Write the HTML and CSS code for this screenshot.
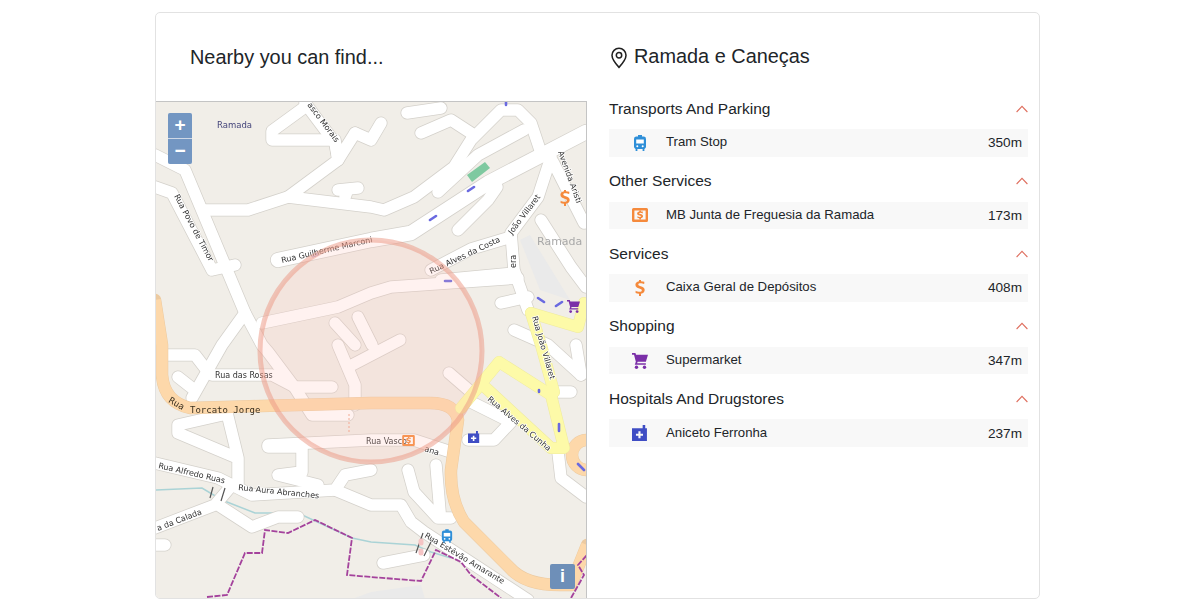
FILE: index.html
```html
<!DOCTYPE html>
<html lang="en">
<head>
<meta charset="utf-8">
<title>Nearby</title>
<link rel="stylesheet" href="styles.css">
</head>
<body>
<svg class="defs" aria-hidden="true">
  <defs>
    <symbol id="i-tram" viewBox="0 0 14 16">
      <path d="M5 0h4v1.600h1.600A2.400 2.400 0 0 1 13 4v7.800a2.200 2.200 0 0 1-1.600 2.100V16H9.600v-2H4.400v2H2.600v-2.100A2.200 2.200 0 0 1 1 11.800V4a2.400 2.400 0 0 1 2.400-2.400H5z"/>
      <path class="cut" d="M3.200 4.400h7.600v4.200H3.200z"/>
      <circle class="cut" cx="4.300" cy="11.300" r="1"/>
      <circle class="cut" cx="9.700" cy="11.300" r="1"/>
    </symbol>
    <symbol id="i-mb" viewBox="0 0 16 14">
      <path fill-rule="evenodd" d="M1.500 0h13A1.500 1.500 0 0 1 16 1.500v11a1.500 1.500 0 0 1-1.500 1.500h-13A1.500 1.500 0 0 1 0 12.500v-11A1.500 1.500 0 0 1 1.500 0zM2.400 2.400v9.200h11.200V2.400z"/>
      <path d="M10.800 4.600V3.500H9V2.500H7.300v1C6 3.700 5.100 4.400 5.100 5.500c0 1.300 1.100 1.800 2.500 2.100 1 .3 1.300.5 1.300.8 0 .3-.3.5-1 .5-.8 0-1.900-.3-2.500-.6v1.500c.5.300 1.300.4 1.900.5v1.200H9v-1.200c1.200-.2 2-.9 2-2 0-1.500-1.200-2-2.500-2.300-1-.2-1.400-.4-1.400-.7 0-.3.400-.5 1.100-.5.800 0 1.900.2 2.600.6z"/>
    </symbol>
    <symbol id="i-dollar" viewBox="0 0 10 16">
      <path d="M9.300 3.600V1.800C8.400 1.500 7.300 1.300 6 1.200V0H4v1.300C1.800 1.600.4 2.900.4 4.800c0 2.300 1.900 3.100 3.900 3.700 1.700.5 2.500 1 2.500 1.900 0 .9-.8 1.400-2.100 1.400-1.500 0-3-.4-4.100-1.100v2.200c.9.500 2.200.8 3.400.9V16h2v-2.200c2.300-.4 3.700-1.700 3.700-3.700 0-2.400-1.900-3.200-4-3.800-1.700-.5-2.400-.9-2.400-1.700 0-.8.700-1.300 2-1.300 1.400 0 2.900.3 3.700.8z"/>
    </symbol>
    <symbol id="i-cart" viewBox="0 0 15 15">
      <path d="M0 0h3.200l.6 1.600H15l-2 6.600H5.300l-.5 1.300H13V11H2.600l1-2.900L1.900 1.600H0z"/>
      <circle cx="4.200" cy="13.400" r="1.600"/>
      <circle cx="11.700" cy="13.400" r="1.600"/>
    </symbol>
    <symbol id="i-pharm" viewBox="0 0 15 15">
      <path fill-rule="evenodd" d="M0 3h10V0h2.400v3H14v12H0zM6 5.800v2.300H3.700v2H6v2.300h2v-2.300h2.300v-2H8V5.800z"/>
    </symbol>
  </defs>
</svg>

<main class="card">
  <section class="left">
    <h2 class="left-title">Nearby you can find...</h2>
    <div class="map">
      <svg class="map-svg" viewBox="156 102 430 497" role="img" aria-label="Street map of Ramada">
        <defs>
          <g id="minor">
            <path d="M155 155L185 170L245 313L262 345L268 352L295 388L312 415L348 415"/>
            <path d="M245 313L222 345L192 398"/>
            <path d="M155 187L172 193L212 270L235 265"/>
            <path d="M205 210H248L288 197L371 207L384 210L414 197L454 167L471 140L501 110L518 110L531 123L541 153"/>
            <path d="M288 197L338 160L355 133M338 160L335 140H272V131L305 107"/>
            <path d="M305 103L335 143L338 160M355 133L371 140L381 123"/>
            <path d="M338 190L358 188M348 189L345 197"/>
            <path d="M407 113L441 108M421 133L451 120L471 133"/>
            <path d="M438 192L478 155L524 130"/>
            <path d="M488 187H497L488 200L458 230"/>
            <path d="M551 157L538 197L511 233L514 270L528 310"/>
            <path d="M431 270L471 249L511 237"/>
            <path d="M553 162L584 223M541 220L571 267L586 287"/>
            <path d="M441 280L514 273M501 303L528 297M514 330L548 345L581 375"/>
            <path d="M262 323L338 307L371 293L391 287L518 278"/>
            <path d="M335 323L355 345M358 317L372 345M338 345L355 385V405M352 365L400 340"/>
            <path d="M165 355H195L205 368M212 375H272L295 387H332M178 377L192 388"/>
            <path d="M222 415L178 425V433L235 457M227 413L238 458V485"/>
            <path d="M155 463L218 478L238 488L252 495L335 490L345 475L371 470"/>
            <path d="M335 490L371 505H401L411 522L424 532L528 600"/>
            <path d="M155 528L215 505L232 485M218 505L252 527L278 517H298"/>
            <path d="M268 447H302V472L278 475L318 485"/>
            <path d="M268 445L371 440H414L451 452"/>
            <path d="M155 545H165"/>
            <path d="M408 470L414 492L438 518H451M436 465L440 512"/>
            <path d="M383 563L424 555"/>
            <path d="M471 402L511 422L494 440H468"/>
            <path d="M449 373L471 392"/>
            <path d="M558 392H571M558 452L561 478L586 497"/>
            <path d="M576 345L581 375"/>
          </g>
          <path id="main-road" d="M278 260L371 240L411 233L488 183L586 132"/>
          <g id="orange">
            <path d="M155 300L162 345V375Q164 402 190 408L371 403H430Q455 403 458 420L451 470Q450 500 464 522L510 568Q525 585 560 585L571 585L587 545"/>
            <circle cx="587" cy="455" r="15"/>
          </g>
          <g id="yellow">
            <path d="M531 313L578 327L584 303"/>
            <path d="M499 362L551 395L564 448H551L486 388M499 362L461 408"/>
            <path d="M531 313L541 345L554 392"/>
          </g>
        </defs>

        <rect class="land" x="156" y="102" width="430" height="497"/>
        <path class="grey-area" d="M371 592L421 585L425 599H352z"/>
        <path class="grey-area" d="M520 240L530 235L570 300L540 290z"/>
        <path class="stream" d="M155 490L202 488L222 500L255 513H298L352 538L371 542L415 545L431 552L451 558"/>

        <use href="#minor" class="casing"/>
        <use href="#main-road" class="casing-wide"/>
        <use href="#minor" class="road"/>
        <use href="#main-road" class="road-wide"/>

        <path class="green" d="M467 175L485 162L490 168L472 182z"/>

        <use href="#orange" class="orange-casing"/>
        <use href="#orange" class="orange"/>
        <use href="#yellow" class="yellow-casing"/>
        <use href="#yellow" class="yellow"/>

        <path class="pink-dash" d="M349 414V433"/>
        <path class="bridge" d="M213 487L210 498M225 488L221 501M423 533L416 553M433 538L424 556"/>
        <path class="pink-dot" d="M421 541V543M421 551V553"/>

        <path class="boundary" d="M207 597L227 595L245 553L262 553L265 530L288 533L315 520L352 538L347 575L371 577L421 581L436 550L461 562L471 575L501 598"/>
        <path class="boundary" d="M571 598L584 575L578 565L587 555"/>
        <path class="arrow" d="M468 191L474 187M430 220L436 216M445 281H451M538 298L544 302M556 306L562 302M506 102V105M313 256L318 254M559 424V431M578 464L584 470M539 390V392"/>

        <text class="lbl lbl-place" x="217" y="128">Ramada</text>
        <text class="lbl" transform="translate(307 105) rotate(53)">asco Morais</text>
        <text class="lbl" transform="translate(174 196) rotate(62)">Rua Povo de Timor</text>
        <text class="lbl" transform="translate(282 263) rotate(-13)">Rua Guilherme Marconi</text>
        <text class="lbl" transform="translate(431 274) rotate(-25)">Rua Alves da Costa</text>
        <text class="lbl" transform="translate(512 235) rotate(-53)">João Villaret</text>
        <text class="lbl" transform="translate(516 268) rotate(-90)">era</text>
        <text class="lbl" transform="translate(558 152) rotate(70)">Avenida Aristi</text>
        <text class="lbl lbl-town" x="537" y="245">Ramada</text>
        <text class="lbl" transform="translate(532 317) rotate(74)">Rua João Villaret</text>
        <text class="lbl" transform="translate(487 400) rotate(40)">Rua Alves da Cunha</text>
        <text class="lbl" x="215" y="378">Rua das Rosas</text>
        <text class="lbl lbl-big" transform="translate(168 402) rotate(30)">Rua</text>
        <text class="lbl lbl-big" x="190" y="413">Torcato Jorge</text>
        <text class="lbl" x="366" y="444">Rua Vasco</text>
        <text class="lbl" transform="translate(424 451) rotate(17)">ana</text>
        <text class="lbl" transform="translate(158 468) rotate(13)">Rua Alfredo Ruas</text>
        <text class="lbl" transform="translate(238 490) rotate(6)">Rua Aura Abranches</text>
        <text class="lbl" transform="translate(158 531) rotate(-21)">a da Calada</text>
        <text class="lbl" transform="translate(424 537) rotate(31)">Rua Estêvão Amarante</text>

        <use href="#i-dollar" class="ic-orange" x="560" y="190" width="10" height="16"/>
        <use href="#i-cart" class="ic-purple" x="567" y="300" width="13" height="13"/>
        <use href="#i-pharm" class="ic-blue" x="468" y="431" width="12" height="12"/>
        <use href="#i-mb" class="ic-orange" x="402" y="435" width="13" height="11"/>
        <use href="#i-tram" class="ic-tram" x="441" y="529" width="12" height="14"/>

        <circle class="radius" cx="371" cy="351" r="111"/>
      </svg>

      <div class="zoom-ctl">
        <span class="zoom-btn">+</span>
        <span class="zoom-btn">−</span>
      </div>
      <span class="info-btn">i</span>
    </div>
  </section>

  <section class="right">
    <h2 class="place">
      <svg class="pin" viewBox="0 0 20 24"><path d="M10 1.200a7.800 7.800 0 0 0-7.800 7.800c0 5 5.200 10.600 7.800 13.400 2.600-2.800 7.800-8.400 7.800-13.400A7.800 7.800 0 0 0 10 1.200z"/><circle cx="10" cy="9" r="3"/></svg>
      Ramada e Caneças
    </h2>
    <div class="groups">
      <div class="group">
        <div class="group-head"><span>Transports And Parking</span><svg class="chev" viewBox="0 0 12 7"><path d="M.6 6.500L6 .8l5.400 5.700"/></svg></div>
        <div class="row"><svg class="row-ic ic-tram"><use href="#i-tram"/></svg><span class="row-name">Tram Stop</span><span class="row-dist">350m</span></div>
      </div>
      <div class="group">
        <div class="group-head"><span>Other Services</span><svg class="chev" viewBox="0 0 12 7"><path d="M.6 6.500L6 .8l5.400 5.700"/></svg></div>
        <div class="row"><svg class="row-ic ic-orange"><use href="#i-mb"/></svg><span class="row-name">MB Junta de Freguesia da Ramada</span><span class="row-dist">173m</span></div>
      </div>
      <div class="group">
        <div class="group-head"><span>Services</span><svg class="chev" viewBox="0 0 12 7"><path d="M.6 6.500L6 .8l5.400 5.700"/></svg></div>
        <div class="row"><svg class="row-ic ic-orange"><use href="#i-dollar"/></svg><span class="row-name">Caixa Geral de Depósitos</span><span class="row-dist">408m</span></div>
      </div>
      <div class="group">
        <div class="group-head"><span>Shopping</span><svg class="chev" viewBox="0 0 12 7"><path d="M.6 6.500L6 .8l5.400 5.700"/></svg></div>
        <div class="row"><svg class="row-ic ic-purple"><use href="#i-cart"/></svg><span class="row-name">Supermarket</span><span class="row-dist">347m</span></div>
      </div>
      <div class="group">
        <div class="group-head"><span>Hospitals And Drugstores</span><svg class="chev" viewBox="0 0 12 7"><path d="M.6 6.500L6 .8l5.400 5.700"/></svg></div>
        <div class="row"><svg class="row-ic ic-blue"><use href="#i-pharm"/></svg><span class="row-name">Aniceto Ferronha</span><span class="row-dist">237m</span></div>
      </div>
    </div>
  </section>
</main>
</body>
</html>
```

FILE: styles.css
```css
* { box-sizing: border-box; }
html, body { height: 100%; }
body {
  margin: 0;
  background: #fff;
  color: #212529;
  font-family: "Liberation Sans", Arial, sans-serif;
  overflow: hidden;
}
.defs { width: 0; height: 0; display: block; overflow: hidden; }

.card {
  width: 885px;
  height: 587px;
  margin: 12px 0 0 155px;
  border: 1px solid #e2e2e2;
  border-radius: 5px;
  display: grid;
  grid-template-columns: 431px 1fr;
  overflow: hidden;
}

.left { display: flex; flex-direction: column; min-height: 0; }
.left-title {
  margin: 0;
  height: 88px;
  padding: 32px 0 0 34px;
  font-size: 19.900px;
  line-height: 24px;
  font-weight: 400;
}
.map {
  position: relative;
  flex: 1;
  border-top: 1px solid #c4c4c4;
  border-right: 1px solid #c4c4c4;
  overflow: hidden;
}
.map-svg { display: block; width: 430px; height: 497px; filter: blur(.45px); }

.land { fill: #f1eee8; }
.grey-area { fill: #eaeaea; }
.stream { fill: none; stroke: #aad3d6; stroke-width: 1.500; }
.casing, .casing-wide, .road, .road-wide, .orange-casing, .orange, .yellow-casing, .yellow {
  fill: none;
  stroke-linecap: round;
  stroke-linejoin: round;
}
.casing { stroke: #d4d1cb; stroke-width: 13; }
.road { stroke: #fff; stroke-width: 11.500; }
.casing-wide { stroke: #d4d1cb; stroke-width: 16; }
.road-wide { stroke: #fff; stroke-width: 14.500; }
.orange-casing { stroke: #eccaa0; stroke-width: 12.500; }
.orange { stroke: #fdd8aa; stroke-width: 11.500; stroke-linecap: butt; }
.yellow-casing { stroke: #eeeaa0; stroke-width: 12; }
.yellow { stroke: #fdfaa8; stroke-width: 11; }
.green { fill: #7fc9a0; }
.pink-dash { fill: none; stroke: #f0a58c; stroke-width: 1; stroke-dasharray: 2 2; }
.bridge { fill: none; stroke: #555; stroke-width: 1.200; }
.pink-dot { fill: none; stroke: #f5c4c4; stroke-width: 5; stroke-linecap: round; }
.boundary { fill: none; stroke: #a4429c; stroke-width: 1.800; stroke-dasharray: 6 1.500; }
.arrow { fill: none; stroke: #6a6ae0; stroke-width: 2.600; stroke-linecap: round; }

.lbl {
  font-family: "DejaVu Sans", sans-serif;
  font-size: 8px;
  fill: #333;
  stroke: #fff;
  stroke-width: 1.500px;
  paint-order: stroke;
}
.lbl-place { fill: #44447a; font-size: 8.500px; stroke: none; }
.lbl-town { fill: #a8a8a8; font-size: 11px; stroke: none; }
.lbl-big { font-size: 9px; stroke: none; fill: #3a3020; font-family: "DejaVu Sans Mono", monospace; }

.radius { fill: rgba(255, 190, 180, .2); stroke: rgba(235, 150, 130, .5); stroke-width: 5; }

.zoom-ctl {
  position: absolute;
  left: 12px;
  top: 11px;
  width: 24px;
  display: flex;
  flex-direction: column;
  gap: 1px;
  border-radius: 2px;
  overflow: hidden;
  background: #cfd8e6;
}
.zoom-btn {
  height: 25px;
  background: #7396c2;
  color: #fff;
  font-weight: 700;
  font-size: 19px;
  line-height: 24px;
  text-align: center;
}
.info-btn {
  position: absolute;
  left: 394px;
  top: 462px;
  width: 25px;
  height: 25px;
  border-radius: 2px;
  background: #6e8fb8;
  color: #fff;
  font-weight: 700;
  font-size: 18px;
  line-height: 25px;
  text-align: center;
}

.right { padding: 0 11px 0 22px; min-width: 0; }
.place {
  margin: 0;
  height: 81px;
  padding-top: 31px;
  font-size: 19.900px;
  line-height: 24px;
  font-weight: 400;
  display: flex;
  align-items: flex-start;
  gap: 6px;
}
.pin { width: 18px; height: 22px; margin: 3px 0 0 1px; fill: none; stroke: #222; stroke-width: 1.700; }
.groups { display: flex; flex-direction: column; gap: 10px; }
.group-head {
  height: 28px;
  margin-bottom: 7px;
  padding-top: 1px;
  display: flex;
  align-items: center;
  justify-content: space-between;
  font-size: 15.500px;
}
.chev { width: 12px; height: 8px; fill: none; stroke: #df7060; stroke-width: 1.100; }
.row {
  height: 27.600px;
  background: #f8f8f8;
  display: flex;
  align-items: center;
  font-size: 13.600px;
  padding-right: 6px;
}
.row-ic { width: 16px; height: 16px; margin-left: 23px; flex: none; }
.row-name { margin-left: 18px; flex: 1; font-size: 13.200px; transform: translateY(-1px); }
.row-dist { flex: none; }

.ic-tram { fill: #2f8fd8; }
.ic-orange { fill: #f58a3c; }
.ic-purple { fill: #7b2fa8; }
.ic-blue { fill: #3f4dc4; }
#i-tram .cut { fill: #fff; }
```
